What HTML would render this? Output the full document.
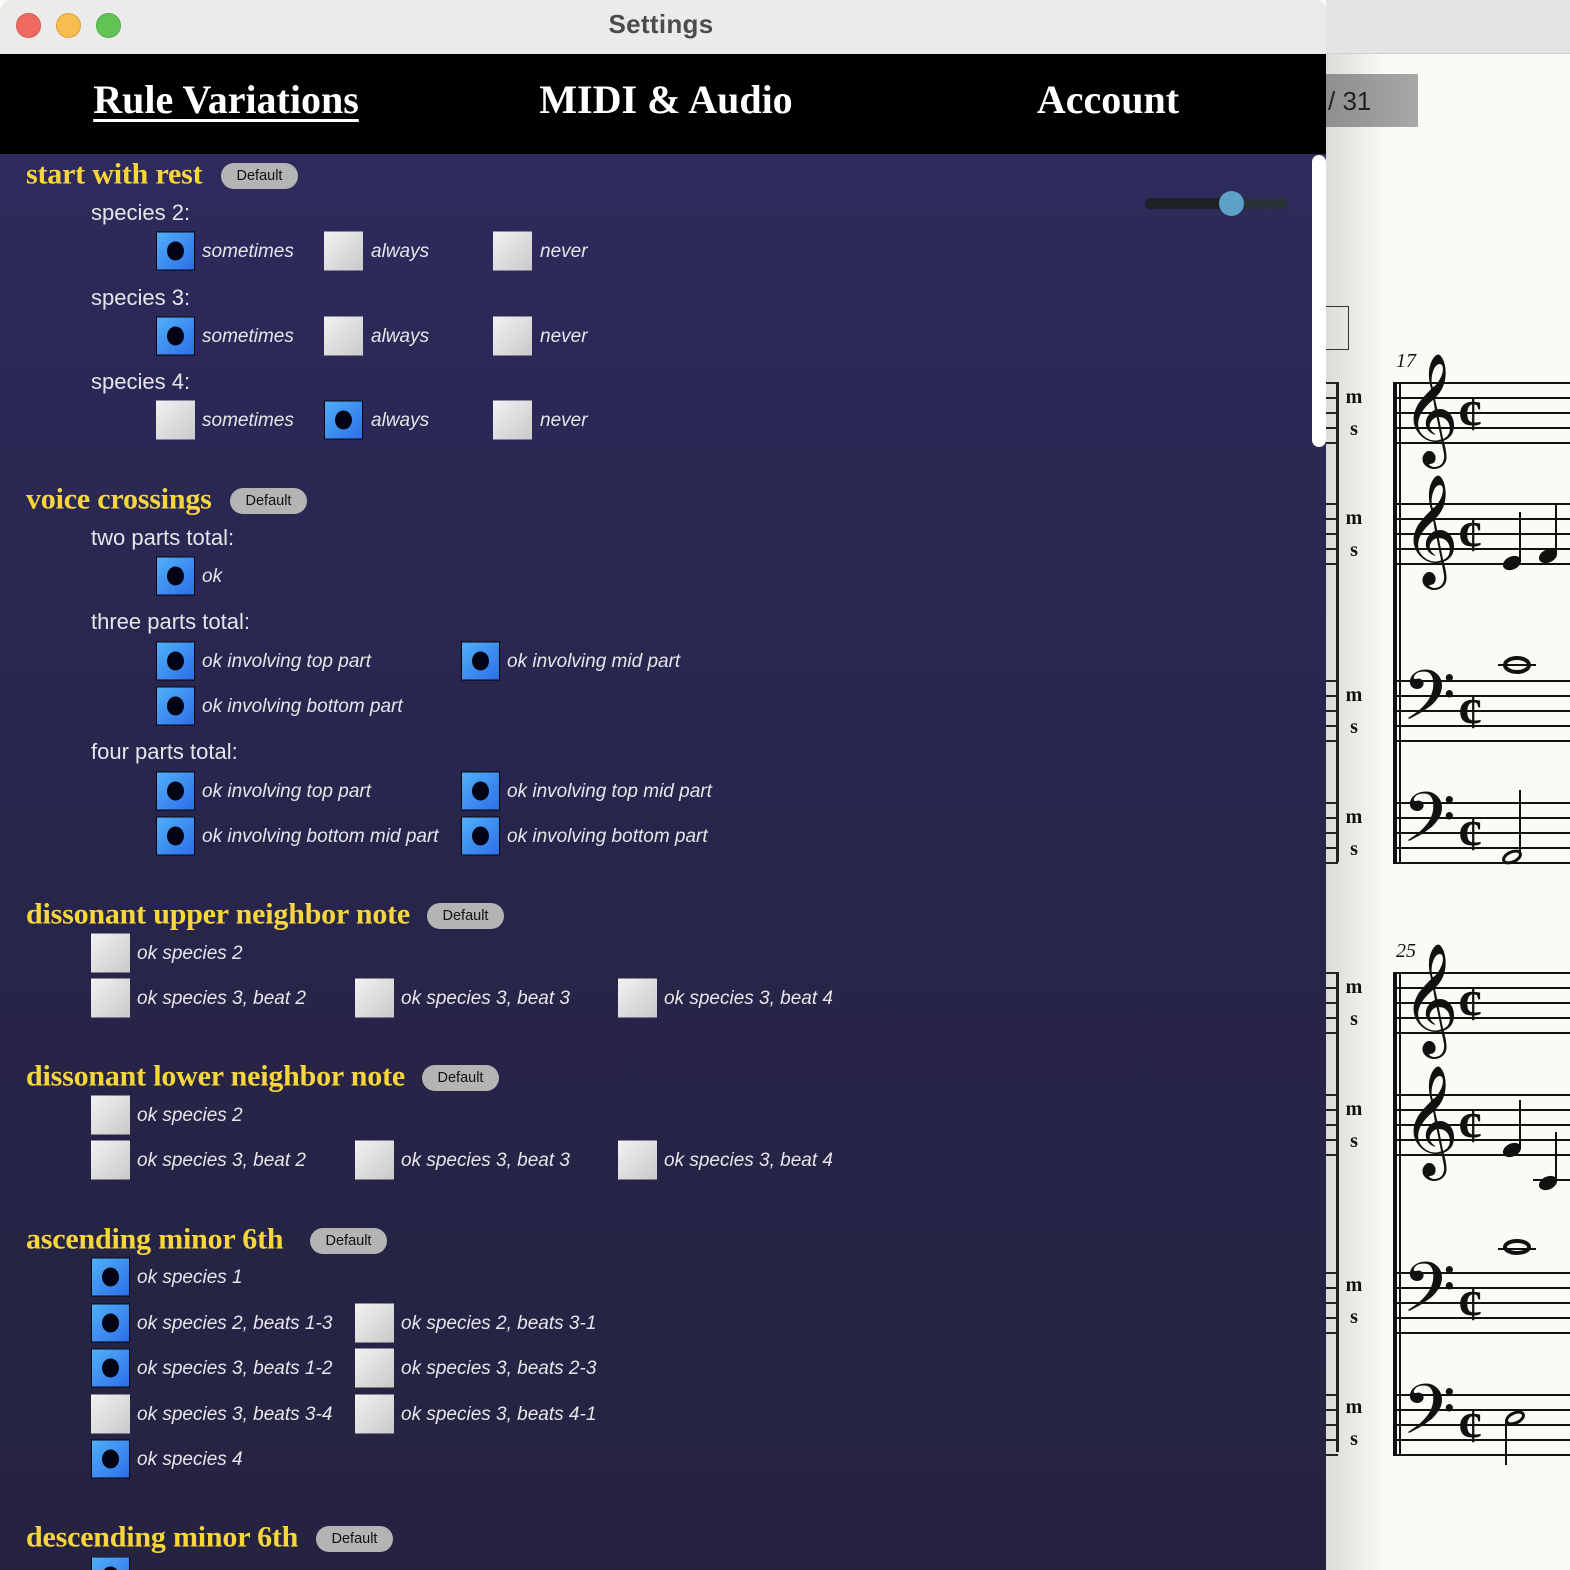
<!DOCTYPE html>
<html><head><meta charset="utf-8"><style>
*{margin:0;padding:0;box-sizing:border-box}
html,body{width:1570px;height:1570px;overflow:hidden}
body{position:relative;background:#fbfbf5;font-family:"Liberation Sans",sans-serif}
#root{position:absolute;left:0;top:0;width:1570px;height:1570px;overflow:hidden}
.a{position:absolute}
#tb{left:0;top:0;width:1326px;height:54px;background:#ebebeb;border-top-left-radius:12px;border-top-right-radius:10px}
.dot{position:absolute;top:13px;width:25px;height:25px;border-radius:50%}
#nav{left:0;top:54px;width:1326px;height:100px;background:#000}
.tab{position:absolute;top:22px;font:bold 40px "Liberation Serif",serif;color:#fff;white-space:nowrap;transform:translateX(-50%)}
#panel{left:0;top:154px;width:1326px;height:1416px;background:linear-gradient(#2e2a5c,#27254a 50%,#262341)}
.h{position:absolute;font:bold 30px "Liberation Serif",serif;color:#f7d63c;white-space:nowrap;letter-spacing:-0.2px;transform:translateY(-52%)}
.d{position:absolute;height:26px;width:77px;border-radius:13px;background:#b4b4b4;color:#111;font-size:14.5px;text-align:center;line-height:26px;transform:translateY(-50%)}
.s{position:absolute;font-size:22px;color:#e6e6ea;white-space:nowrap;transform:translateY(-50%)}
.l{position:absolute;font-style:italic;font-size:19px;color:#e6e6ea;white-space:nowrap;transform:translateY(-50%)}
.c,.u{position:absolute;width:39px;height:39px;transform:translateY(-50%)}
.u{background:linear-gradient(135deg,#f2f2f2,#c9c9c9)}
.c{background:linear-gradient(135deg,#4fb0f8,#2d6ee8);border:1.5px solid #05070f}
.c::after{content:"";position:absolute;left:10px;top:9px;width:17px;height:19px;border-radius:50%;background:#020314}
.st{position:absolute;left:1393px;width:177px;height:62px;background:repeating-linear-gradient(#111 0 2px,transparent 2px 15px)}
.stl{position:absolute;left:1326px;width:12px;height:62px;background:repeating-linear-gradient(#222 0 2px,transparent 2px 15px)}
.ms{position:absolute;left:1344px;font:bold 20px "Liberation Serif",serif;color:#111;line-height:32px;text-align:center;width:20px}
.cl{position:absolute;font-family:"DejaVu Sans",serif;color:#111;line-height:1}
.ct{position:absolute;font:bold 50px "Liberation Serif",serif;color:#111;line-height:1}
</style></head><body><div id="root">
<div class="a" style="left:1326px;top:0;width:244px;height:54px;background:#e4e4e4;border-bottom:1px solid #d0d0d0"></div>
<div class="a" style="left:1326px;top:54px;width:60px;height:1516px;background:linear-gradient(90deg,#dcdcd6,#fbfbf5)"></div>
<div class="a" style="left:1326px;top:74px;width:92px;height:53px;background:linear-gradient(90deg,#8e8e8e,#a8a8a8);color:#222;font-size:26px;line-height:55px;padding-left:2px">/ 31</div>
<div class="a" style="left:1326px;top:306px;width:23px;height:44px;border:1px solid #333;border-left:none"></div>
<div class="a" style="left:1336px;top:382px;width:3px;height:480px;background:#222"></div>
<div class="a" style="left:1336px;top:972px;width:3px;height:480px;background:#222"></div>
<div class="stl" style="top:382px"></div><div class="stl" style="top:503px"></div><div class="stl" style="top:680px"></div><div class="stl" style="top:802px"></div>
<div class="stl" style="top:972px"></div><div class="stl" style="top:1094px"></div><div class="stl" style="top:1272px"></div><div class="stl" style="top:1394px"></div>
<div class="ms" style="top:381px">m<br>s</div><div class="ms" style="top:502px">m<br>s</div><div class="ms" style="top:679px">m<br>s</div><div class="ms" style="top:801px">m<br>s</div>
<div class="ms" style="top:971px">m<br>s</div><div class="ms" style="top:1093px">m<br>s</div><div class="ms" style="top:1269px">m<br>s</div><div class="ms" style="top:1391px">m<br>s</div>
<div class="st" style="top:382px"></div><div class="st" style="top:503px"></div><div class="st" style="top:680px"></div><div class="st" style="top:802px"></div>
<div class="st" style="top:972px"></div><div class="st" style="top:1094px"></div><div class="st" style="top:1272px"></div><div class="st" style="top:1394px"></div>
<div class="a" style="left:1393px;top:382px;width:4px;height:482px;background:#111"></div><div class="a" style="left:1399px;top:382px;width:1.5px;height:482px;background:#111"></div>
<div class="a" style="left:1393px;top:972px;width:4px;height:482px;background:#111"></div><div class="a" style="left:1399px;top:972px;width:1.5px;height:482px;background:#111"></div>
<div class="a" style="left:1396px;top:350px;font:italic 20px 'Liberation Serif',serif;color:#111">17</div>
<div class="a" style="left:1396px;top:940px;font:italic 20px 'Liberation Serif',serif;color:#111">25</div>
<div class="cl" style="left:1402px;top:360px;font-size:96px">𝄞</div>
<div class="cl" style="left:1402px;top:481px;font-size:96px">𝄞</div>
<div class="cl" style="left:1402px;top:950px;font-size:96px">𝄞</div>
<div class="cl" style="left:1402px;top:1072px;font-size:96px">𝄞</div>
<div class="cl" style="left:1402px;top:662px;font-size:84px">𝄢</div>
<div class="cl" style="left:1402px;top:784px;font-size:84px">𝄢</div>
<div class="cl" style="left:1402px;top:1254px;font-size:84px">𝄢</div>
<div class="cl" style="left:1402px;top:1376px;font-size:84px">𝄢</div>
<div class="ct" style="left:1458px;top:388px">¢</div><div class="ct" style="left:1458px;top:509px">¢</div><div class="ct" style="left:1458px;top:686px">¢</div><div class="ct" style="left:1458px;top:808px">¢</div>
<div class="ct" style="left:1458px;top:978px">¢</div><div class="ct" style="left:1458px;top:1100px">¢</div><div class="ct" style="left:1458px;top:1278px">¢</div><div class="ct" style="left:1458px;top:1400px">¢</div>
<svg class="a" style="left:1490px;top:490px" width="80" height="980" viewBox="0 0 80 980">
<g fill="#111" stroke="#111">
<ellipse cx="22" cy="73" rx="9" ry="6" transform="rotate(-25 22 73)"/><line x1="30" y1="70" x2="30" y2="22" stroke-width="2"/>
<ellipse cx="58" cy="66" rx="9" ry="6" transform="rotate(-25 58 66)"/><line x1="66" y1="63" x2="66" y2="15" stroke-width="2"/>
<line x1="8" y1="175" x2="46" y2="175" stroke-width="2"/><ellipse cx="27" cy="175" rx="12" ry="7" fill="none" stroke-width="4"/>
<ellipse cx="22" cy="367" rx="9" ry="5" fill="none" stroke-width="3" transform="rotate(-25 22 367)"/><line x1="30" y1="365" x2="30" y2="300" stroke-width="2"/>
<ellipse cx="22" cy="660" rx="9" ry="6" transform="rotate(-25 22 660)"/><line x1="30" y1="657" x2="30" y2="610" stroke-width="2"/>
<line x1="43" y1="690" x2="80" y2="690" stroke-width="2"/><ellipse cx="58" cy="693" rx="9" ry="6" transform="rotate(-25 58 693)"/><line x1="66" y1="690" x2="66" y2="642" stroke-width="2"/>
<line x1="8" y1="759" x2="46" y2="759" stroke-width="2"/><ellipse cx="27" cy="757" rx="12" ry="6" fill="none" stroke-width="4"/>
<ellipse cx="25" cy="928" rx="9" ry="5" fill="none" stroke-width="3" transform="rotate(-25 25 928)"/><line x1="16" y1="930" x2="16" y2="975" stroke-width="2"/>
</g></svg>

<div class="a" id="tb"></div>
<div class="dot" style="left:16px;background:#ee6a5f;border:1px solid #d8584d"></div>
<div class="dot" style="left:56px;background:#f6be4f;border:1px solid #dca23c"></div>
<div class="dot" style="left:96px;background:#61c454;border:1px solid #4fac43"></div>
<div class="a" style="left:0;width:1322px;top:9px;text-align:center;font-size:26px;font-weight:bold;color:#4c4c4c;letter-spacing:0.3px">Settings</div>
<div class="a" id="nav">
<div class="tab" style="left:226px;text-decoration:underline;text-decoration-thickness:3px;text-underline-offset:6px">Rule Variations</div>
<div class="tab" style="left:666px">MIDI &amp; Audio</div>
<div class="tab" style="left:1108px">Account</div>
</div>
<div class="a" id="panel"></div>
<div class="a" style="left:1312px;top:155px;width:14px;height:292px;background:#fff;border-radius:7px"></div>
<div class="a" style="left:1145px;top:198px;width:143px;height:11px;border-radius:6px;background:linear-gradient(90deg,#1d2226 60%,#283237 60%)"></div>
<div class="a" style="left:1219px;top:191px;width:25px;height:25px;border-radius:50%;background:#5da1c8"></div>

<div class="h" style="left:26px;top:175px">start with rest</div><div class="d" style="left:221px;top:176px">Default</div>
<div class="s" style="left:91px;top:213px">species 2:</div>
<div class="c" style="left:156px;top:251px"></div><div class="l" style="left:202px;top:252px">sometimes</div>
<div class="u" style="left:324px;top:251px"></div><div class="l" style="left:371px;top:252px">always</div>
<div class="u" style="left:493px;top:251px"></div><div class="l" style="left:540px;top:252px">never</div>
<div class="s" style="left:91px;top:298px">species 3:</div>
<div class="c" style="left:156px;top:336px"></div><div class="l" style="left:202px;top:337px">sometimes</div>
<div class="u" style="left:324px;top:336px"></div><div class="l" style="left:371px;top:337px">always</div>
<div class="u" style="left:493px;top:336px"></div><div class="l" style="left:540px;top:337px">never</div>
<div class="s" style="left:91px;top:382px">species 4:</div>
<div class="u" style="left:156px;top:420px"></div><div class="l" style="left:202px;top:421px">sometimes</div>
<div class="c" style="left:324px;top:420px"></div><div class="l" style="left:371px;top:421px">always</div>
<div class="u" style="left:493px;top:420px"></div><div class="l" style="left:540px;top:421px">never</div>

<div class="h" style="left:26px;top:500px">voice crossings</div><div class="d" style="left:230px;top:501px">Default</div>
<div class="s" style="left:91px;top:538px">two parts total:</div>
<div class="c" style="left:156px;top:576px"></div><div class="l" style="left:202px;top:577px">ok</div>
<div class="s" style="left:91px;top:622px">three parts total:</div>
<div class="c" style="left:156px;top:661px"></div><div class="l" style="left:202px;top:662px">ok involving top part</div>
<div class="c" style="left:461px;top:661px"></div><div class="l" style="left:507px;top:662px">ok involving mid part</div>
<div class="c" style="left:156px;top:706px"></div><div class="l" style="left:202px;top:707px">ok involving bottom part</div>
<div class="s" style="left:91px;top:752px">four parts total:</div>
<div class="c" style="left:156px;top:791px"></div><div class="l" style="left:202px;top:792px">ok involving top part</div>
<div class="c" style="left:461px;top:791px"></div><div class="l" style="left:507px;top:792px">ok involving top mid part</div>
<div class="c" style="left:156px;top:836px"></div><div class="l" style="left:202px;top:837px">ok involving bottom mid part</div>
<div class="c" style="left:461px;top:836px"></div><div class="l" style="left:507px;top:837px">ok involving bottom part</div>

<div class="h" style="left:26px;top:915px">dissonant upper neighbor note</div><div class="d" style="left:427px;top:916px">Default</div>
<div class="u" style="left:91px;top:953px"></div><div class="l" style="left:137px;top:954px">ok species 2</div>
<div class="u" style="left:91px;top:998px"></div><div class="l" style="left:137px;top:999px">ok species 3, beat 2</div>
<div class="u" style="left:355px;top:998px"></div><div class="l" style="left:401px;top:999px">ok species 3, beat 3</div>
<div class="u" style="left:618px;top:998px"></div><div class="l" style="left:664px;top:999px">ok species 3, beat 4</div>

<div class="h" style="left:26px;top:1077px">dissonant lower neighbor note</div><div class="d" style="left:422px;top:1078px">Default</div>
<div class="u" style="left:91px;top:1115px"></div><div class="l" style="left:137px;top:1116px">ok species 2</div>
<div class="u" style="left:91px;top:1160px"></div><div class="l" style="left:137px;top:1161px">ok species 3, beat 2</div>
<div class="u" style="left:355px;top:1160px"></div><div class="l" style="left:401px;top:1161px">ok species 3, beat 3</div>
<div class="u" style="left:618px;top:1160px"></div><div class="l" style="left:664px;top:1161px">ok species 3, beat 4</div>

<div class="h" style="left:26px;top:1240px">ascending minor 6th</div><div class="d" style="left:310px;top:1241px">Default</div>
<div class="c" style="left:91px;top:1277px"></div><div class="l" style="left:137px;top:1278px">ok species 1</div>
<div class="c" style="left:91px;top:1323px"></div><div class="l" style="left:137px;top:1324px">ok species 2, beats 1-3</div>
<div class="u" style="left:355px;top:1323px"></div><div class="l" style="left:401px;top:1324px">ok species 2, beats 3-1</div>
<div class="c" style="left:91px;top:1368px"></div><div class="l" style="left:137px;top:1369px">ok species 3, beats 1-2</div>
<div class="u" style="left:355px;top:1368px"></div><div class="l" style="left:401px;top:1369px">ok species 3, beats 2-3</div>
<div class="u" style="left:91px;top:1414px"></div><div class="l" style="left:137px;top:1415px">ok species 3, beats 3-4</div>
<div class="u" style="left:355px;top:1414px"></div><div class="l" style="left:401px;top:1415px">ok species 3, beats 4-1</div>
<div class="c" style="left:91px;top:1459px"></div><div class="l" style="left:137px;top:1460px">ok species 4</div>

<div class="h" style="left:26px;top:1538px">descending minor 6th</div><div class="d" style="left:316px;top:1539px">Default</div>
<div class="a" style="left:91px;top:1557px;width:39px;height:13px;overflow:hidden"><div class="c" style="left:0;top:19px"></div></div>
</div></body></html>
